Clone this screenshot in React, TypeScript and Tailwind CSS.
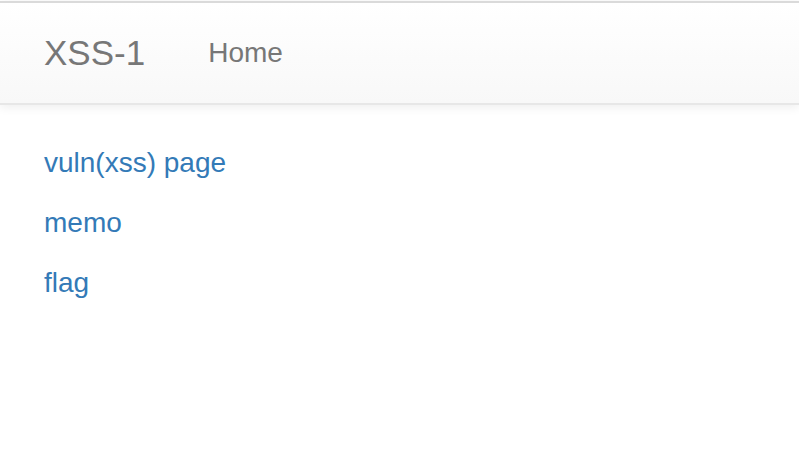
export default function App() {
  const links = ["vuln(xss) page", "memo", "flag"];

  return (
    <div className="min-h-screen bg-white pt-px font-['Liberation_Sans',Arial,sans-serif]">
      <nav className="flex h-[104px] items-start border-y-2 border-t-[#dadada] border-b-[#e7e7e7] bg-gradient-to-b from-white to-[#f8f8f8] pl-[44px] shadow-[0_2px_10px_rgba(0,0,0,0.075)]">
        <a href="#" className="py-[30px] pr-[63px] text-[35px] leading-[40px] text-[#777]">
          XSS-1
        </a>
        <a href="#" className="py-[30px] text-[28px] leading-[40px] text-[#777]">
          Home
        </a>
      </nav>

      <div className="mt-[38px] flex flex-col gap-[20px] pl-[44px]">
        {links.map((l) => (
          <p key={l} className="text-[28px] leading-[40px]">
            <a href="#" className="text-[#337ab7]">
              {l}
            </a>
          </p>
        ))}
      </div>
    </div>
  );
}
